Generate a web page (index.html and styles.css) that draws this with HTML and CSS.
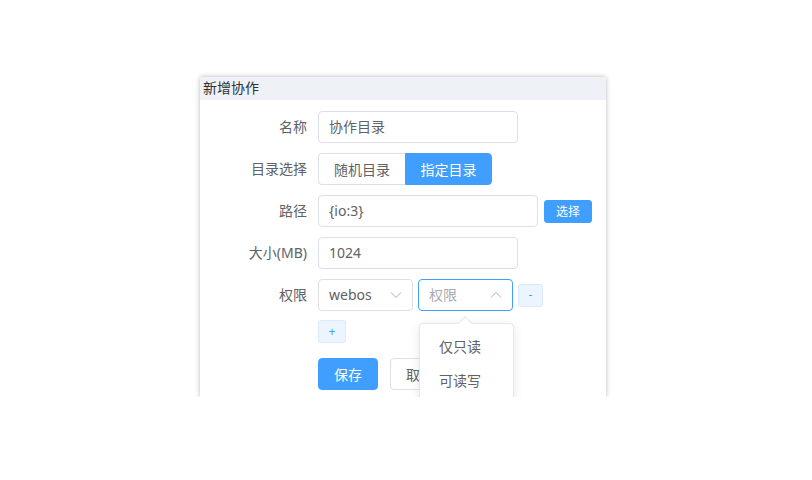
FILE: index.html
```html
<!DOCTYPE html>
<html lang="zh">
<head>
<meta charset="utf-8">
<title>新增协作</title>
<link rel="stylesheet" href="styles.css">
</head>
<body>
<div class="dialog">
  <div class="dialog-header">新增协作</div>
  <div class="dialog-body">
    <div class="form-item">
      <label class="form-label">名称</label>
      <div class="form-content">
        <div class="input w200"><span class="val">协作目录</span></div>
      </div>
    </div>
    <div class="form-item">
      <label class="form-label">目录选择</label>
      <div class="form-content">
        <div class="radio-group">
          <span class="radio-btn">随机目录</span>
          <span class="radio-btn active">指定目录</span>
        </div>
      </div>
    </div>
    <div class="form-item">
      <label class="form-label">路径</label>
      <div class="form-content">
        <div class="input w220"><span class="val">{io:3}</span></div>
        <button class="btn-small primary">选择</button>
      </div>
    </div>
    <div class="form-item">
      <label class="form-label">大小(MB)</label>
      <div class="form-content">
        <div class="input w200"><span class="val">1024</span></div>
      </div>
    </div>
    <div class="form-item">
      <label class="form-label">权限</label>
      <div class="form-content">
        <div class="select"><span class="val">webos</span>
          <svg class="chev" viewBox="0 0 12 12" width="12" height="12"><path d="M1 3.5 L6 8.5 L11 3.5" fill="none" stroke="#a8abb2" stroke-width="1"/></svg>
        </div>
        <div class="select focused"><span class="val ph">权限</span>
          <svg class="chev" viewBox="0 0 12 12" width="12" height="12"><path d="M1 8.5 L6 3.5 L11 8.5" fill="none" stroke="#a8abb2" stroke-width="1"/></svg>
        </div>
        <button class="btn-mini plain">-</button>
      </div>
    </div>
    <div class="add-row">
      <button class="btn-mini plain wide">+</button>
    </div>
    <div class="actions">
      <button class="btn primary">保存</button>
      <button class="btn">取消</button>
    </div>
  </div>
  <div class="dropdown">
    <div class="dropdown-arrow"></div>
    <div class="dropdown-item">仅只读</div>
    <div class="dropdown-item">可读写</div>
  </div>
</div>
</body>
</html>
```
FILE: styles.css
```css
* { box-sizing: border-box; }
html, body { margin: 0; padding: 0; background: #fff; }
body {
  font-family: "Noto Sans", "Noto Sans CJK SC", sans-serif;
  font-size: 14px;
  color: #606266;
}
.dialog {
  position: relative;
  width: 406px;
  height: 320px;
  margin: 77px 0 0 200px;
  background: #fff;
  box-shadow: 0 0 5px rgba(0, 0, 0, 0.28);
  overflow: hidden;
}
.dialog-header {
  height: 23px;
  line-height: 22px;
  padding-left: 3px;
  background: #eef2f7;
  color: #303133;
  font-size: 14px;
}
.dialog-body { padding-top: 11px; }
.form-item {
  display: flex;
  align-items: center;
  height: 32px;
  margin-bottom: 10px;
}
.form-label {
  width: 118px;
  padding-right: 11px;
  text-align: right;
  color: #606266;
  font-size: 14px;
  line-height: 32px;
}
.form-content {
  display: flex;
  align-items: center;
  height: 32px;
}
.input {
  height: 32px;
  border: 1px solid #dcdfe6;
  border-radius: 4px;
  padding: 0 10px;
  display: flex;
  align-items: center;
  color: #606266;
}
.w200 { width: 200px; }
.w220 { width: 220px; }
.val { line-height: 1; }
.ph { color: #a8abb2; }
.radio-group { display: flex; }
.radio-btn {
  width: 87px;
  height: 32px;
  display: flex;
  align-items: center;
  justify-content: center;
  border: 1px solid #dcdfe6;
  color: #606266;
  background: #fff;
}
.radio-btn:first-child { border-radius: 4px 0 0 4px; border-right: 0; }
.radio-btn.active {
  background: #409eff;
  border-color: #409eff;
  color: #fff;
  border-radius: 0 4px 4px 0;
}
button {
  font-family: inherit;
  cursor: pointer;
  padding: 0;
}
.btn-small {
  width: 48px;
  height: 23px;
  margin-left: 6px;
  border-radius: 3px;
  font-size: 12px;
}
.primary {
  background: #409eff;
  border: 1px solid #409eff;
  color: #fff;
}
.select {
  width: 95px;
  height: 32px;
  border: 1px solid #dcdfe6;
  border-radius: 4px;
  padding: 0 10px;
  display: flex;
  align-items: center;
  justify-content: space-between;
  margin-right: 5px;
}
.select.focused { border-color: #409eff; }
.chev { display: block; }
.btn-mini {
  width: 25px;
  height: 23px;
  border-radius: 3px;
  font-size: 12px;
  line-height: 1;
}
.plain {
  background: #ecf5ff;
  border: 1px solid #d9ecff;
  color: #409eff;
}
.wide { width: 28px; }
.add-row {
  padding-left: 118px;
  margin-top: -1px;
  height: 24px;
}
.actions {
  padding-left: 118px;
  margin-top: 14px;
  display: flex;
}
.btn {
  width: 60px;
  height: 32px;
  border-radius: 4px;
  border: 1px solid #dcdfe6;
  background: #fff;
  color: #606266;
  font-size: 14px;
  margin-right: 12px;
}
.btn.primary {
  background: #409eff;
  border-color: #409eff;
  color: #fff;
}
.dropdown {
  position: absolute;
  left: 219px;
  top: 246px;
  width: 95px;
  height: 120px;
  background: #fff;
  border: 1px solid #e4e7ed;
  border-radius: 4px;
  box-shadow: 0 2px 10px rgba(0, 0, 0, 0.1);
  padding-top: 6px;
}
.dropdown-arrow {
  position: absolute;
  top: -6px;
  left: 40px;
  width: 10px;
  height: 10px;
  background: #fff;
  border-left: 1px solid #e4e7ed;
  border-top: 1px solid #e4e7ed;
  transform: rotate(45deg);
}
.dropdown-item {
  height: 34px;
  line-height: 34px;
  padding-left: 19px;
  color: #606266;
  font-size: 14px;
}
```
